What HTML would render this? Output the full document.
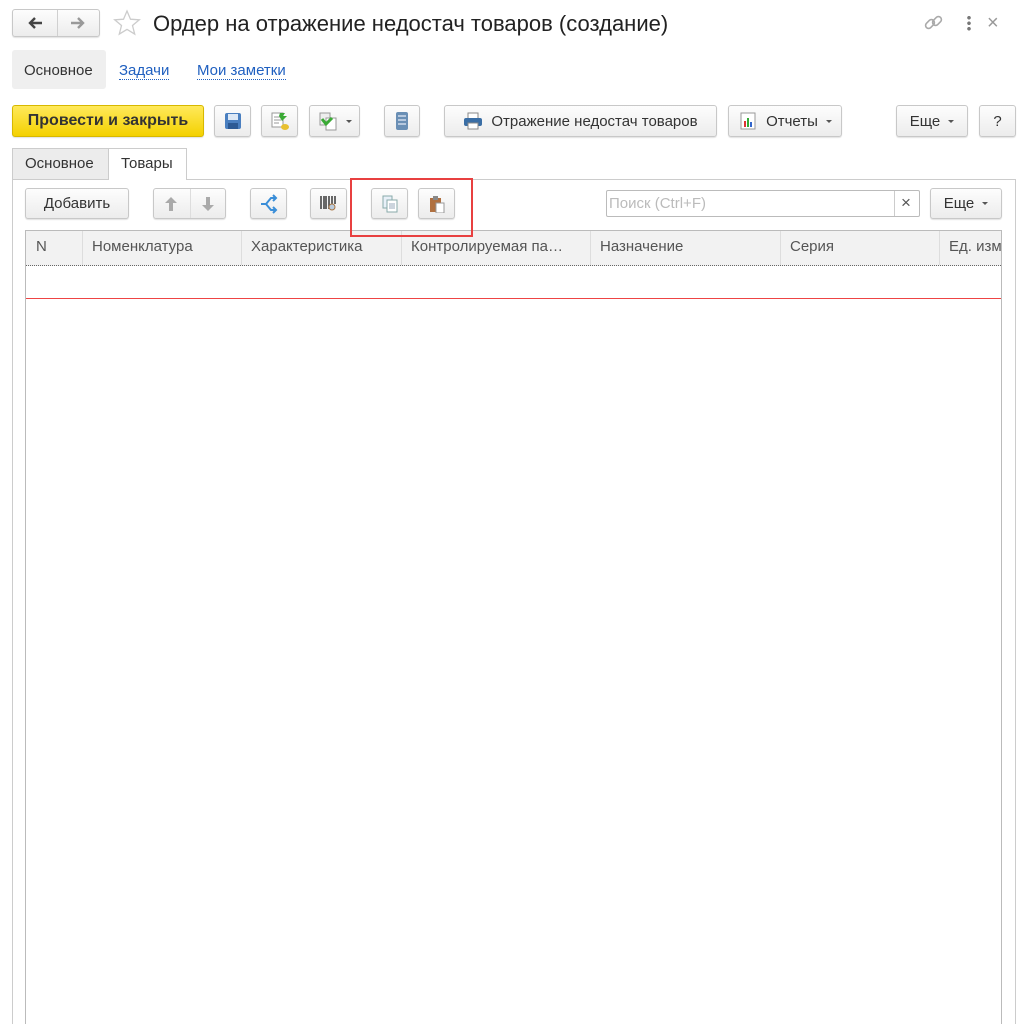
<!DOCTYPE html>
<html style="height:1024px;overflow:hidden"><head><meta charset="utf-8"><style>
*{box-sizing:border-box;margin:0;padding:0}
body{width:1024px;height:1024px;background:#fff;font-family:"Liberation Sans",sans-serif;color:#333;position:relative;overflow:hidden;font-size:15px}
.a{position:absolute}
.btn{position:absolute;border:1px solid #c8c8c8;border-radius:3px;background:linear-gradient(#fdfdfd,#ececec);box-shadow:0 1px 1px rgba(0,0,0,.12);display:flex;align-items:center;justify-content:center;font-size:15px;color:#333}
.dd{display:inline-block;width:0;height:0;border-left:3px solid transparent;border-right:3px solid transparent;border-top:3px solid #555;margin-left:8px}
.th{position:absolute;top:231px;height:34px;line-height:32px;font-size:15px;color:#555;border-right:1px solid #ddd;padding-left:10px;white-space:nowrap;overflow:hidden}
</style></head><body>
<div class="btn" style="left:12px;top:9px;width:88px;height:28px;justify-content:flex-start">
 <div class="a" style="left:44px;top:0;width:1px;height:26px;background:#d0d0d0"></div>
 <svg class="a" style="left:14px;top:6px" width="16" height="14"><path d="M15 7H3M8 2L3 7l5 5" stroke="#444" stroke-width="2.4" fill="none"/></svg>
 <svg class="a" style="left:57px;top:6px" width="16" height="14"><path d="M1 7h12M8 2l5 5-5 5" stroke="#999" stroke-width="2.4" fill="none"/></svg>
</div>
<svg class="a" style="left:113px;top:9px" width="30" height="28"><path d="M14 2l3.5 8.2 8.8.6-6.8 5.7 2.2 8.6L14 20.4 6.3 25.1l2.2-8.6L1.7 10.8l8.8-.6z" fill="none" stroke="#ccc" stroke-width="1.3"/></svg>
<div class="a" style="left:153px;top:11px;font-size:22px;color:#222;white-space:nowrap">Ордер на отражение недостач товаров (создание)</div>
<svg class="a" style="left:923px;top:12px" width="22" height="22"><g fill="none" stroke="#aaa" stroke-width="1.6"><rect x="2" y="9" width="10" height="6" rx="3" transform="rotate(-45 7 12)"/><rect x="9" y="6" width="10" height="6" rx="3" transform="rotate(-45 14 9)"/></g></svg>
<div class="a" style="left:967px;top:15px;width:4px;height:16px;background:radial-gradient(circle,#777 1.6px,transparent 2px) 0 0/4px 5.5px"></div>
<div class="a" style="left:987px;top:12px;font-size:20px;color:#999">×</div>

<div class="a" style="left:12px;top:50px;width:94px;height:39px;background:#efefef;border-radius:3px;line-height:41px;padding-left:12px">Основное</div>
<div class="a" style="left:119px;top:63px;color:#2060c0;border-bottom:1px dotted #2060c0;line-height:16px">Задачи</div>
<div class="a" style="left:197px;top:63px;color:#2060c0;border-bottom:1px dotted #2060c0;line-height:16px">Мои заметки</div>

<div class="btn" style="left:12px;top:105px;width:192px;height:32px;background:linear-gradient(#ffe95a,#f4d100);border-color:#d7b800;font-weight:bold;color:#333;font-size:16px">Провести и закрыть</div>
<div class="btn" style="left:214px;top:105px;width:37px;height:32px"><svg width="18" height="18"><rect x="1" y="1" width="16" height="16" rx="2" fill="#4a7fc0"/><rect x="4" y="2" width="10" height="6" fill="#dde8f5"/><rect x="4" y="11" width="10" height="6" fill="#2d5a94"/></svg></div>
<div class="btn" style="left:261px;top:105px;width:37px;height:32px"><svg width="20" height="20"><rect x="2" y="2" width="11" height="14" fill="#fff" stroke="#999"/><path d="M4 6h7M4 9h7M4 12h5" stroke="#999"/><path d="M10 2h5l-2 3h4l-5 5-3-5" fill="#3aaa35"/><ellipse cx="15" cy="16" rx="4" ry="3" fill="#e8c030"/></svg></div>
<div class="btn" style="left:309px;top:105px;width:51px;height:32px"><svg width="20" height="20"><rect x="2" y="2" width="10" height="12" fill="#eee" stroke="#999"/><rect x="8" y="7" width="10" height="12" fill="#fff" stroke="#999"/><path d="M4 8l4 5 6-6" stroke="#3aaa35" stroke-width="3" fill="none"/></svg><span class="dd"></span></div>
<div class="btn" style="left:384px;top:105px;width:36px;height:32px"><svg width="14" height="20"><rect x="1" y="1" width="12" height="18" rx="2" fill="#6a8fb5"/><path d="M3 5h8M3 9h8M3 13h8" stroke="#cfdceb" stroke-width="1.5"/></svg></div>
<div class="btn" style="left:444px;top:105px;width:273px;height:32px"><svg width="20" height="18" style="margin-right:8px"><rect x="5" y="1" width="10" height="6" fill="#fff" stroke="#888"/><rect x="1" y="6" width="18" height="8" rx="2" fill="#3a6ea5"/><rect x="5" y="11" width="10" height="6" fill="#fff" stroke="#888"/></svg>Отражение недостач товаров</div>
<div class="btn" style="left:728px;top:105px;width:114px;height:32px"><svg width="20" height="20" style="margin-right:8px"><rect x="3" y="2" width="14" height="16" fill="#fff" stroke="#999"/><rect x="6" y="10" width="2" height="6" fill="#d33"/><rect x="9" y="7" width="2" height="9" fill="#3a3"/><rect x="12" y="11" width="2" height="5" fill="#36c"/></svg>Отчеты<span class="dd"></span></div>
<div class="btn" style="left:896px;top:105px;width:72px;height:32px">Еще<span class="dd"></span></div>
<div class="btn" style="left:979px;top:105px;width:37px;height:32px">?</div>

<div class="a" style="left:12px;top:148px;width:97px;height:32px;background:#ececec;border:1px solid #ccc;line-height:30px;padding-left:12px">Основное</div>
<div class="a" style="left:108px;top:148px;width:79px;height:32px;background:#fff;border:1px solid #ccc;border-bottom:none;line-height:30px;padding-left:12px;z-index:2">Товары</div>
<div class="a" style="left:12px;top:179px;width:1004px;height:845px;border:1px solid #ccc;border-bottom:none"></div>

<div class="btn" style="left:25px;top:188px;width:104px;height:31px">Добавить</div>
<div class="btn" style="left:153px;top:188px;width:73px;height:31px"><div class="a" style="left:36px;top:0;width:1px;height:29px;background:#ddd"></div>
<svg class="a" style="left:10px;top:7px" width="14" height="16"><path d="M7 1l6 6H9v8H5V7H1z" fill="#aaa"/></svg>
<svg class="a" style="left:47px;top:7px" width="14" height="16"><path d="M7 15l6-6H9V1H5v8H1z" fill="#aaa"/></svg></div>
<div class="btn" style="left:250px;top:188px;width:37px;height:31px"><svg width="20" height="20"><path d="M2 10h5l5-6h5M7 10l5 6h5M14 1l3 3-3 3M14 13l3 3-3 3" stroke="#3a8ed8" stroke-width="2" fill="none"/></svg></div>
<div class="btn" style="left:310px;top:188px;width:37px;height:31px"><svg width="20" height="18"><path d="M2 1v13M5 1v13M7 1v13M10 1v13M13 1v9M16 1v8" stroke="#444" stroke-width="1.6"/><circle cx="13" cy="12" r="3" fill="#bcd" stroke="#a74"/></svg></div>
<div class="btn" style="left:371px;top:188px;width:37px;height:31px"><svg width="18" height="18"><rect x="2" y="1" width="9" height="12" fill="#e8f0f8" stroke="#8aa"/><rect x="6" y="5" width="10" height="12" fill="#fff" stroke="#8aa"/><path d="M8 9h6M8 11h6M8 13h6" stroke="#9ab"/></svg></div>
<div class="btn" style="left:418px;top:188px;width:37px;height:31px"><svg width="18" height="18"><rect x="2" y="3" width="11" height="14" fill="#b07040"/><rect x="5" y="1" width="5" height="4" fill="#888"/><rect x="8" y="8" width="8" height="10" fill="#fff" stroke="#999"/></svg></div>
<div class="a" style="left:350px;top:178px;width:123px;height:59px;border:2px solid #e84040;z-index:3"></div>
<div class="a" style="left:606px;top:190px;width:314px;height:27px;border:1px solid #bbb;border-radius:2px;background:#fff"><span class="a" style="left:2px;top:4px;color:#bbb">Поиск (Ctrl+F)</span><div class="a" style="left:287px;top:0;width:1px;height:25px;background:#ccc"></div><span class="a" style="left:294px;top:2px;color:#555;font-size:17px">×</span></div>
<div class="btn" style="left:930px;top:188px;width:72px;height:31px">Еще<span class="dd"></span></div>

<div class="a" style="left:25px;top:230px;width:977px;height:794px;border:1px solid #bbb;border-bottom:none;overflow:hidden">
<div class="a" style="left:0;top:0;width:977px;height:35px;background:#f2f2f2"></div>
<div class="a" style="left:0;top:34px;width:977px;height:1px;border-top:1px dotted #666"></div>
<div class="a" style="left:0;top:67px;width:977px;height:1px;background:#e44"></div>
</div>
<div class="th" style="left:26px;width:57px">N</div>
<div class="th" style="left:82px;width:160px">Номенклатура</div>
<div class="th" style="left:241px;width:161px">Характеристика</div>
<div class="th" style="left:401px;width:190px">Контролируемая па…</div>
<div class="th" style="left:590px;width:191px">Назначение</div>
<div class="th" style="left:780px;width:160px">Серия</div>
<div class="th" style="left:939px;width:62px;border-right:none">Ед. изм</div>
</body></html>
